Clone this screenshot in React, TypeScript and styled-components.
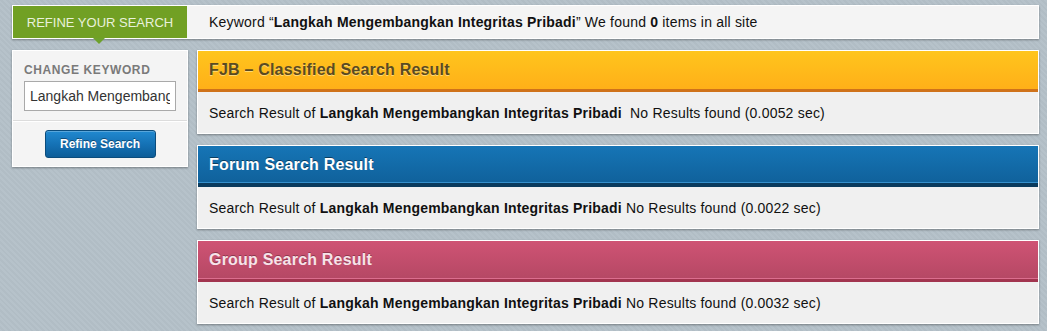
import * as React from 'react'
import styled, { createGlobalStyle } from 'styled-components'

const GlobalStyle = createGlobalStyle`
  html, body {
    margin: 0;
    padding: 0;
  }
  body {
    font-family: "Liberation Sans", Arial, sans-serif;
    font-size: 14px;
    color: #000;
    background-color: #b4c0c8;
    background-image: repeating-linear-gradient(
      45deg,
      #b6c2ca 0px,
      #b6c2ca 2px,
      #b1bdc5 2px,
      #b1bdc5 4px
    );
    min-height: 331px;
  }
`

const Page = styled.div`
  padding: 5px 8px 0 12px;
`

const TopBar = styled.div`
  display: flex;
  align-items: stretch;
  height: 34px;
  background: #f4f4f4;
  border: 1px solid #fff;
  box-shadow: 0 1px 2px rgba(0, 0, 0, 0.35);
  box-sizing: border-box;

  .summary {
    display: flex;
    align-items: center;
    padding-left: 22px;
    color: #111;
    font-size: 14px;
    letter-spacing: 0.2px;
  }
`

const RefineTab = styled.div`
  position: relative;
  display: flex;
  align-items: center;
  justify-content: center;
  width: 174px;
  background: #71a024;
  color: #e9f1dc;
  font-size: 13px;
  text-transform: uppercase;

  &:after {
    content: '';
    position: absolute;
    left: 80px;
    bottom: -6px;
    border-left: 6px solid transparent;
    border-right: 6px solid transparent;
    border-top: 6px solid #6ea12c;
  }
`

const Columns = styled.div`
  display: flex;
  align-items: flex-start;
  gap: 9px;
  margin-top: 11px;
`

const Sidebar = styled.div`
  width: 176px;
  box-sizing: border-box;
  background: #f4f4f4;
  border: 1px solid #fff;
  box-shadow: 0 1px 2px rgba(0, 0, 0, 0.35);
  padding-bottom: 8px;

  .label {
    padding: 12px 0 0 11px;
    font-size: 12px;
    font-weight: bold;
    letter-spacing: 0.6px;
    color: #7a7a7a;
    line-height: 14px;
  }

  .field {
    padding: 4px 11px 9px 11px;
  }

  .sep {
    height: 1px;
    background: #dcdcdc;
    border-bottom: 1px solid #fff;
  }

  .actions {
    display: flex;
    justify-content: center;
    padding-top: 8px;
  }
`

const KeywordInput = styled.input`
  display: block;
  width: 152px;
  height: 30px;
  box-sizing: border-box;
  border: 1px solid #a9a9a9;
  background: #fff;
  padding: 0 5px;
  font-family: "Liberation Sans", Arial, sans-serif;
  font-size: 14px;
  color: #333;
  outline: none;
`

const RefineButton = styled.button`
  width: 111px;
  height: 28px;
  box-sizing: border-box;
  border: 1px solid #0b4c7c;
  border-radius: 3px;
  background: linear-gradient(to bottom, #2189d0 0%, #1470b3 55%, #0d5d98 100%);
  box-shadow: inset 0 1px 0 rgba(255, 255, 255, 0.25);
  color: #fff;
  font-family: "Liberation Sans", Arial, sans-serif;
  font-size: 12px;
  font-weight: bold;
  text-shadow: 0 -1px 0 rgba(0, 0, 0, 0.4);
  cursor: pointer;
`

const Results = styled.div`
  flex: 1;
  display: flex;
  flex-direction: column;
  gap: 11px;
`

type Tone = 'fjb' | 'forum' | 'group'

const tones: Record<Tone, { bg: string; border: string; color: string; shadow: string }> = {
  fjb: {
    bg: 'linear-gradient(to bottom, #ffc51d 0%, #ffae18 100%)',
    border: 'box-shadow: inset 0 -3px 0 #cf721a;',
    color: '#5a4a22',
    shadow: '0 1px 0 rgba(255, 240, 180, 0.6)',
  },
  forum: {
    bg: 'linear-gradient(to bottom, #1675b6 0%, #0f5f98 100%)',
    border: 'box-shadow: inset 0 -4px 0 #0a3b5d, inset 0 -5px 0 #3590cc;',
    color: '#ffffff',
    shadow: '0 -1px 0 rgba(0, 0, 0, 0.45)',
  },
  group: {
    bg: 'linear-gradient(to bottom, #cf5374 0%, #b34763 100%)',
    border: 'box-shadow: inset 0 -3px 0 #a2354f, inset 0 -4px 0 #dc6e8e;',
    color: '#f7e3e9',
    shadow: '0 -1px 0 rgba(0, 0, 0, 0.3)',
  },
}

const Panel = styled.div`
  border: 1px solid #fff;
  box-shadow: 0 1px 2px rgba(0, 0, 0, 0.35);
  background: #f0f0f0;
`

const PanelHeader = styled.div<{ $tone: Tone }>`
  height: 41px;
  box-sizing: border-box;
  padding: 0 0 3px 11px;
  display: flex;
  align-items: center;
  background: ${(p) => tones[p.$tone].bg};
  ${(p) => tones[p.$tone].border}
  color: ${(p) => tones[p.$tone].color};
  text-shadow: ${(p) => tones[p.$tone].shadow};
  font-size: 16px;
  font-weight: bold;
  letter-spacing: 0.2px;
`

const PanelBody = styled.div`
  height: 41px;
  display: flex;
  align-items: center;
  padding-left: 11px;
  color: #111;
  font-size: 14px;
  letter-spacing: 0.2px;

  span {
    white-space: pre;
  }
`

const keyword = 'Langkah Mengembangkan Integritas Pribadi'

const sections: { tone: Tone; title: string; gap: string; time: string }[] = [
  { tone: 'fjb', title: 'FJB – Classified Search Result', gap: '  ', time: '0.0052' },
  { tone: 'forum', title: 'Forum Search Result', gap: ' ', time: '0.0022' },
  { tone: 'group', title: 'Group Search Result', gap: ' ', time: '0.0032' },
]

export default function App() {
  return (
    <>
      <GlobalStyle />
      <Page>
        <TopBar>
          <RefineTab>Refine Your Search</RefineTab>
          <div className="summary">
            <span>
              Keyword “<b>{keyword}</b>” We found <b>0</b> items in all site
            </span>
          </div>
        </TopBar>
        <Columns>
          <Sidebar>
            <div className="label">CHANGE KEYWORD</div>
            <div className="field">
              <KeywordInput defaultValue={keyword} />
            </div>
            <div className="sep" />
            <div className="actions">
              <RefineButton>Refine Search</RefineButton>
            </div>
          </Sidebar>
          <Results>
            {sections.map((s) => (
              <Panel key={s.tone}>
                <PanelHeader $tone={s.tone}>{s.title}</PanelHeader>
                <PanelBody>
                  <span>
                    {'Search Result of '}
                    <b>{keyword}</b>
                    {s.gap + 'No Results found (' + s.time + ' sec)'}
                  </span>
                </PanelBody>
              </Panel>
            ))}
          </Results>
        </Columns>
      </Page>
    </>
  )
}
